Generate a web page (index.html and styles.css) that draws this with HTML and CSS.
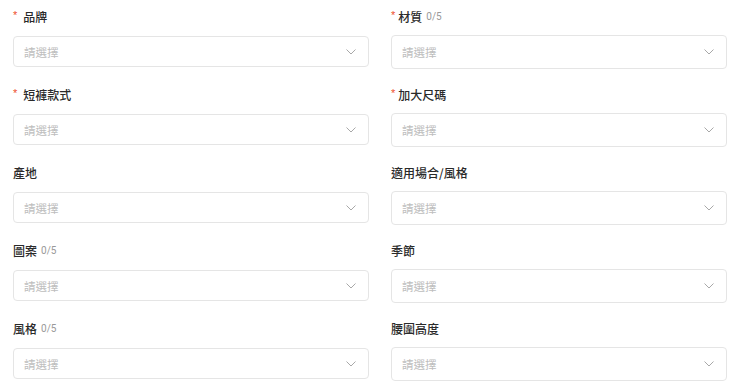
FILE: index.html
```html
<!DOCTYPE html>
<html lang="zh-Hant">
<head>
<meta charset="utf-8">
<link rel="stylesheet" href="styles.css">
</head>
<body>
<div class="form">
  <div class="field left">
    <div class="label"><span class="req">*</span>品牌</div>
    <div class="select"><span class="ph">請選擇</span><svg class="chev" viewBox="0 0 10 6"><path d="M0.5 0.5 L5 5 L9.5 0.5"/></svg></div>
  </div>
  <div class="field right">
    <div class="label"><span class="req">*</span>材質<span class="count">0/5</span></div>
    <div class="select"><span class="ph">請選擇</span><svg class="chev" viewBox="0 0 10 6"><path d="M0.5 0.5 L5 5 L9.5 0.5"/></svg></div>
  </div>
  <div class="field left">
    <div class="label"><span class="req">*</span>短褲款式</div>
    <div class="select"><span class="ph">請選擇</span><svg class="chev" viewBox="0 0 10 6"><path d="M0.5 0.5 L5 5 L9.5 0.5"/></svg></div>
  </div>
  <div class="field right">
    <div class="label"><span class="req">*</span>加大尺碼</div>
    <div class="select"><span class="ph">請選擇</span><svg class="chev" viewBox="0 0 10 6"><path d="M0.5 0.5 L5 5 L9.5 0.5"/></svg></div>
  </div>
  <div class="field left">
    <div class="label">產地</div>
    <div class="select"><span class="ph">請選擇</span><svg class="chev" viewBox="0 0 10 6"><path d="M0.5 0.5 L5 5 L9.5 0.5"/></svg></div>
  </div>
  <div class="field right">
    <div class="label">適用場合/風格</div>
    <div class="select"><span class="ph">請選擇</span><svg class="chev" viewBox="0 0 10 6"><path d="M0.5 0.5 L5 5 L9.5 0.5"/></svg></div>
  </div>
  <div class="field left">
    <div class="label">圖案<span class="count">0/5</span></div>
    <div class="select"><span class="ph">請選擇</span><svg class="chev" viewBox="0 0 10 6"><path d="M0.5 0.5 L5 5 L9.5 0.5"/></svg></div>
  </div>
  <div class="field right">
    <div class="label">季節</div>
    <div class="select"><span class="ph">請選擇</span><svg class="chev" viewBox="0 0 10 6"><path d="M0.5 0.5 L5 5 L9.5 0.5"/></svg></div>
  </div>
  <div class="field left">
    <div class="label">風格<span class="count">0/5</span></div>
    <div class="select"><span class="ph">請選擇</span><svg class="chev" viewBox="0 0 10 6"><path d="M0.5 0.5 L5 5 L9.5 0.5"/></svg></div>
  </div>
  <div class="field right">
    <div class="label">腰圍高度</div>
    <div class="select"><span class="ph">請選擇</span><svg class="chev" viewBox="0 0 10 6"><path d="M0.5 0.5 L5 5 L9.5 0.5"/></svg></div>
  </div>
</div>
</body>
</html>
```
FILE: styles.css
```css
html, body {
  margin: 0;
  padding: 0;
  background: #fff;
}
body {
  font-family: "Noto Sans CJK TC", "Noto Sans", "Liberation Sans", sans-serif;
  color: #333;
}
.form {
  display: grid;
  grid-template-columns: 356px 336px;
  column-gap: 22px;
  row-gap: 16px;
  padding: 7px 0 0 13px;
}
.field {
  display: flex;
  flex-direction: column;
}
.label {
  height: 20px;
  line-height: 20px;
  font-size: 12px;
  font-weight: 500;
  color: #2a2a2a;
  display: flex;
  align-items: center;
  margin-bottom: 9px;
}
.right .label {
  margin-bottom: 8px;
}
.req {
  color: #ee4d2d;
  font-size: 11px;
  margin-right: 6px;
  margin-top: -4px;
  font-family: "Liberation Sans", sans-serif;
}
.right .req {
  margin-right: 3px;
}
.count {
  color: #999;
  font-size: 10px;
  font-weight: 400;
  margin-left: 4px;
  font-family: "Roboto", "Liberation Sans", sans-serif;
}
.select {
  box-sizing: border-box;
  height: 31px;
  border: 1px solid #e5e5e5;
  border-radius: 4px;
  display: flex;
  align-items: center;
  justify-content: space-between;
  padding: 0 12px 0 10px;
}
.right .select {
  height: 34px;
}
.ph {
  font-size: 11.5px;
  color: #bdbdbd;
}
.chev {
  width: 10px;
  height: 6px;
  fill: none;
  stroke: #a8a8a8;
  stroke-width: 1;
}
```
